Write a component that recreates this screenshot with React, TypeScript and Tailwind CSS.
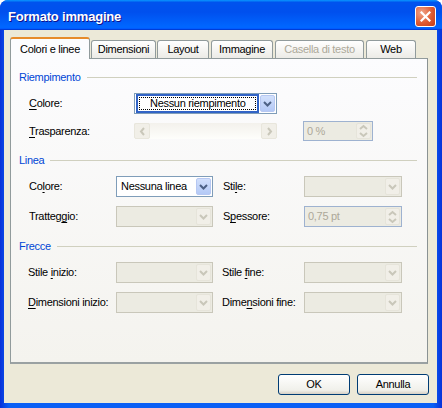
import React from 'react';

// Small chevron used by the combo boxes
const Chevron = ({ color }: { color: string }) => (
  <svg width="9" height="6" viewBox="0 0 9 6">
    <path d="M1 1 L4.5 4.5 L8 1" fill="none" stroke={color} strokeWidth="2" />
  </svg>
);

const Arrow = ({ dir, color }: { dir: 'left' | 'right' | 'up' | 'down'; color: string }) => {
  const d = {
    left: 'M5 1 L2 4.5 L5 8',
    right: 'M2 1 L5 4.5 L2 8',
    up: 'M1 5 L4.5 2 L8 5',
    down: 'M1 2 L4.5 5 L8 2',
  }[dir];
  const vertical = dir === 'up' || dir === 'down';
  return (
    <svg width={vertical ? 9 : 7} height={vertical ? 7 : 9} viewBox={vertical ? '0 0 9 7' : '0 0 7 9'}>
      <path d={d} fill="none" stroke={color} strokeWidth="2" />
    </svg>
  );
};

interface ComboProps {
  className: string;
  text?: string;
  enabled?: boolean;
  focused?: boolean;
}

const Combo = ({ className, text, enabled = false, focused = false }: ComboProps) => (
  <div className={`flex h-[21px] border ${enabled ? 'border-[#7f9db9] bg-white' : 'border-[#c9c7ba] bg-[#ecebe2]'} ${className}`}>
    <div className="flex-1 flex items-center min-w-0">
      {focused ? (
        <div className="ml-px h-[19px] flex-1 border-2 border-[#3163c6] bg-white p-px">
          <div className="h-full border border-dotted border-black flex items-center pl-[10px] text-black">{text}</div>
        </div>
      ) : (
        <span className="pl-[4px] text-black">{text}</span>
      )}
    </div>
    <div
      className={`my-px mr-px ml-px w-[15px] h-[17px] flex items-center justify-center rounded-[2px] border ${
        enabled ? 'border-[#b7c8f2] bg-[linear-gradient(180deg,#d2e0fc,#b4c9f6)]' : 'border-[#e6e4da] bg-[#f1efe8]'
      }`}
    >
      <Chevron color={enabled ? '#4d6185' : '#c9c7ba'} />
    </div>
  </div>
);

const Spin = ({ className, text }: { className: string; text: string }) => (
  <div className={`flex border border-[#9eb2d0] bg-[#ecebe2] ${className}`}>
    <div className="flex-1 flex items-center pl-[3px] text-[#aca899]">{text}</div>
    <div className="my-px mr-px w-[15px] flex flex-col rounded-[2px] bg-[#f1efe8] border border-[#e6e4da]">
      <div className="flex-1 flex items-end justify-center">
        <Arrow dir="up" color="#c9c7ba" />
      </div>
      <div className="flex-1 flex items-start justify-center">
        <Arrow dir="down" color="#c9c7ba" />
      </div>
    </div>
  </div>
);

const ScrollBar = () => (
  <div className="flex h-[16px] w-[143px] bg-[linear-gradient(180deg,#f3f1ec,#fefefb)]">
    <div className="w-[16px] h-[16px] flex items-center justify-center rounded-[2px] border border-[#e8e6dc] bg-[#f1efe8]">
      <Arrow dir="left" color="#c9c7ba" />
    </div>
    <div className="flex-1" />
    <div className="w-[16px] h-[16px] flex items-center justify-center rounded-[2px] border border-[#e8e6dc] bg-[#f1efe8]">
      <Arrow dir="right" color="#c9c7ba" />
    </div>
  </div>
);

const SectionHeader = ({ title, className }: { title: string; className: string }) => (
  <div className={`flex items-center h-[14px] pl-[8px] pr-[10px] ${className}`}>
    <span className="text-[#0046d5]">{title}</span>
    <div className="flex-1 h-px bg-[#d0d0bf] ml-[6px]" />
  </div>
);

// Label with an underlined access key
const Label = ({ before, key_, after, className }: { before: string; key_: string; after: string; className: string }) => (
  <div className={`shrink-0 text-black ${className}`}>
    {before}
    <span className="underline underline-offset-2">{key_}</span>
    {after}
  </div>
);

const Tab = ({ label, className, disabled = false }: { label: string; className: string; disabled?: boolean }) => (
  <div
    className={`h-[18px] flex items-center justify-center rounded-t-[3px] border border-b-0 border-[#919b9c] bg-[linear-gradient(180deg,#ffffff,#ecebe6)] ${
      disabled ? 'text-[#aca899]' : 'text-black'
    } ${className}`}
  >
    {label}
  </div>
);

const Button = ({ label }: { label: string }) => (
  <div className="w-[72px] h-[21px] flex items-center justify-center rounded-[3px] border border-[#003c74] bg-[linear-gradient(180deg,#ffffff,#f0f0ea_80%,#d6d0c5)] text-black">
    {label}
  </div>
);

export default function App() {
  return (
    <div className="w-[442px] h-[408px] bg-white text-[11px] leading-[13px] tracking-[-0.3px] font-['Liberation_Sans',Arial,sans-serif]">
      <div className="w-[442px] h-[408px] flex flex-col rounded-t-[8px] overflow-hidden bg-[linear-gradient(90deg,#0831d9,#0a5ff5_2%,#0a5ff5_98%,#0831d9)]">
        {/* Title bar */}
        <div className="h-[30px] shrink-0 flex items-center justify-between bg-[linear-gradient(180deg,#0997ff,#0053ee_8%,#0050ee_40%,#0066ff_88%,#0066ff_93%,#005bff_95%,#003dd7_96%,#003dd7)]">
          <span className="ml-[8px] mt-[2px] text-white font-bold text-[13px] tracking-[-0.2px] [text-shadow:1px_1px_#0f1089]">Formato immagine</span>
          <div className="mr-[6px] mt-[2px] w-[21px] h-[21px] rounded-[3px] border border-white flex items-center justify-center bg-[radial-gradient(circle_at_30%_30%,#f0a58a,#e05b32_55%,#c23b16)]">
            <svg width="11" height="11" viewBox="0 0 11 11">
              <path d="M1.5 1.5 L9.5 9.5 M9.5 1.5 L1.5 9.5" stroke="white" strokeWidth="2.2" strokeLinecap="square" />
            </svg>
          </div>
        </div>

        {/* Body */}
        <div className="flex-1 ml-[4px] mr-[5px] mb-[5px] bg-[#ece9d8] flex flex-col">
          {/* Tabs */}
          <div className="mt-[7px] ml-[6px] flex items-end h-[21px]">
            <div className="relative z-10 -mb-px w-[80px] h-[22px] flex items-center justify-center rounded-t-[3px] border border-b-0 border-[#919b9c] border-t-[#e68b2c] border-t-2 bg-[#fcfcfe] text-black">
              Colori e linee
            </div>
            <Tab label="Dimensioni" className="ml-px w-[65px]" />
            <Tab label="Layout" className="ml-px w-[52px]" />
            <Tab label="Immagine" className="ml-[2px] w-[62px]" />
            <Tab label="Casella di testo" className="ml-[2px] w-[89px]" disabled />
            <Tab label="Web" className="ml-[2px] w-[50px]" />
          </div>

          {/* Panel */}
          <div className="ml-[6px] w-[418px] h-[306px] border border-[#919b9c] border-r-[#8a9293] border-b-2 border-b-[#9aa1a2] bg-[linear-gradient(180deg,#fcfcfe,#f4f3ee)] flex flex-col">
            <SectionHeader title="Riempimento" className="mt-[11px]" />
            <div className="mt-[9px] h-[21px] flex items-center pl-[18px]">
              <Label before="" key_="C" after="olore:" className="w-[105px]" />
              <Combo className="w-[143px]" text="Nessun riempimento" enabled focused />
            </div>
            <div className="mt-[7px] h-[20px] flex items-center pl-[18px]">
              <Label before="" key_="T" after="rasparenza:" className="w-[105px]" />
              <ScrollBar />
              <Spin className="ml-[26px] w-[70px] h-[20px]" text="0 %" />
            </div>

            <SectionHeader title="Linea" className="mt-[12px]" />
            <div className="mt-[9px] h-[21px] flex items-center pl-[18px]">
              <Label before="Co" key_="l" after="ore:" className="w-[87px]" />
              <Combo className="w-[97px]" text="Nessuna linea" enabled />
              <Label before="Sti" key_="l" after="e:" className="ml-[10px] w-[81px]" />
              <Combo className="w-[98px]" />
            </div>
            <div className="mt-[9px] h-[21px] flex items-center pl-[18px]">
              <Label before="Tratteg" key_="g" after="io:" className="w-[87px]" />
              <Combo className="w-[97px]" />
              <Label before="S" key_="p" after="essore:" className="ml-[10px] w-[81px]" />
              <Spin className="w-[98px] h-[21px]" text="0,75 pt" />
            </div>

            <SectionHeader title="Frecce" className="mt-[12px]" />
            <div className="mt-[9px] h-[21px] flex items-center pl-[17px]">
              <Label before="Stile " key_="i" after="nizio:" className="w-[88px]" />
              <Combo className="w-[97px]" />
              <Label before="Stile " key_="f" after="ine:" className="ml-[9px] w-[82px]" />
              <Combo className="w-[98px]" />
            </div>
            <div className="mt-[9px] h-[21px] flex items-center pl-[17px]">
              <Label before="" key_="D" after="imensioni inizio:" className="w-[88px]" />
              <Combo className="w-[97px]" />
              <Label before="Dime" key_="n" after="sioni fine:" className="ml-[9px] w-[82px]" />
              <Combo className="w-[98px]" />
            </div>
          </div>

          {/* Buttons */}
          <div className="mt-[10px] mr-[8px] flex justify-end gap-[7px]">
            <Button label="OK" />
            <Button label="Annulla" />
          </div>
        </div>
      </div>
    </div>
  );
}
